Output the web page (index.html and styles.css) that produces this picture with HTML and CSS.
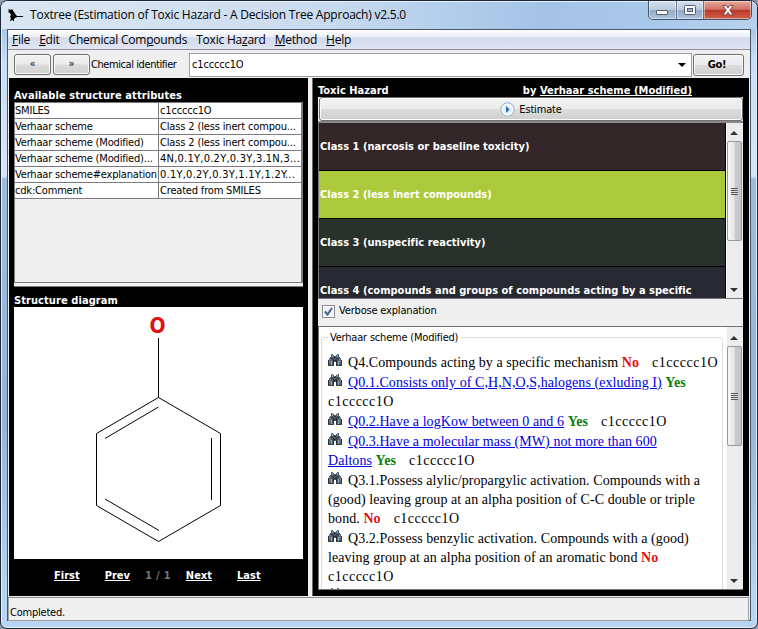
FILE: index.html
```html
<!DOCTYPE html>
<html lang="en">
<head>
<meta charset="utf-8">
<title>Toxtree</title>
<link rel="stylesheet" href="styles.css">
</head>
<body>
<svg class="defs" width="0" height="0">
  <symbol id="binoculars" viewBox="0 0 14 12">
    <path fill="#4d5a66" d="M3 1h3v1h2V1h3v2h1v1h1v2h1v5H8V8H6v3H0V6h1V4h1V3h1z"/>
    <path fill="#2a3138" d="M6 3h2v1H6zM5 5h1v6H5zM8 5h1v6H8zM0 6h1v5H0zM13 6h1v5h-1zM6 6h2v1H6zM3 4h2v1H3zM9 4h2v1H9z"/>
    <path fill="#9aa8b4" d="M4 1h1v2H4zM9 1h1v2H9zM3 7h1v4H3zM10 7h1v4h-1z"/>
    <path fill="#66737f" d="M1 4h2v6H1zM11 4h2v6h-2zM3 0h2v1H3zM9 0h2v1H9z"/>
    <path fill="#3b4550" d="M0 11h6v1H0zM8 11h6v1H8z"/>
  </symbol>
</svg>
<div class="window">
  <header class="titlebar">
    <svg class="app-icon" width="16" height="14" viewBox="0 0 16 14"><path d="M0 1l3 1 1-1 2 3 2 3 1 1h6v1H9l-2 1-1 1v2H5v-1l-3 1 1-3-1-1 1-2-1-2-2-1 1-1z"/></svg>
    <h1>Toxtree (Estimation of Toxic Hazard - A Decision Tree Approach) v2.5.0</h1>
    <div class="controls">
      <span class="ctl min"><svg width="13" height="6"><rect x=".5" y=".5" width="11" height="4" rx=".5" fill="#fff" stroke="#555b70"/></svg></span>
      <span class="ctl max"><svg width="12" height="11"><rect x=".5" y=".5" width="11" height="9" rx="1" fill="#fff" stroke="#555b70"/><rect x="3.5" y="3.5" width="5" height="3" fill="#9fb4cf" stroke="#555b70"/></svg></span>
      <span class="ctl close"><svg width="12" height="11" viewBox="0 0 12 11"><path d="M1 .5h3l2 2.600 2-2.600h3L7.800 5.200 11 10H8L6 7.300 4 10H1l3.200-4.800z" fill="#fff" stroke="#6b3a3f" stroke-width=".8"/></svg></span>
    </div>
  </header>
  <div class="client">
    <nav class="menubar">
      <span><u>F</u>ile</span><span><u>E</u>dit</span><span>Chemical Com<u>p</u>ounds</span><span>Toxic Ha<u>z</u>ard</span><span><u>M</u>ethod</span><span><u>H</u>elp</span>
    </nav>
    <div class="toolbar">
      <button class="btn nav">«</button><button class="btn nav">»</button>
      <label>Chemical identifier</label>
      <div class="combo"><span>c1ccccc1O</span><i class="arrow"></i></div>
      <button class="btn go">Go!</button>
    </div>
    <main class="split">
      <section class="left">
        <h2 class="attr-title">Available structure attributes</h2>
        <div class="attr-view">
          <div class="grid">
            <span>SMILES</span><span>c1ccccc1O</span>
            <span>Verhaar scheme</span><span class="w">Class 2 (less inert compou...</span>
            <span>Verhaar scheme (Modified)</span><span class="w">Class 2 (less inert compou...</span>
            <span>Verhaar scheme (Modified)...</span><span class="n">4N,0.1Y,0.2Y,0.3Y,3.1N,3...</span>
            <span>Verhaar scheme#explanation</span><span class="n">0.1Y,0.2Y,0.3Y,1.1Y,1.2Y...</span>
            <span>cdk:Comment</span><span>Created from SMILES</span>
          </div>
        </div>
        <div class="attr-divider"></div>
        <h2 class="dia-title">Structure diagram</h2>
        <svg class="diagram" width="289" height="252" viewBox="14 307 289 252">
          <g fill="none" stroke="#000"><path d="M158.500 338V397.500L220.500 433.500V505.500L158.500 541.500L96.500 505.500V433.500L158.500 397.500"/><path d="M158.500 407L105 438.500M211.500 438V500M105 499L159 530.500"/></g>
          <text class="atom" x="157.500" y="332.500" text-anchor="middle">O</text>
        </svg>
        <div class="pager"><a>First</a><a>Prev</a><span>1 / 1</span><a>Next</a><a>Last</a></div>
      </section>
      <div class="divider"></div>
      <section class="right">
        <div class="haz-head"><span>Toxic Hazard</span><span class="by">by <u>Verhaar scheme (Modified)</u></span></div>
        <div class="est-wrap"><button class="btn est"><svg width="15" height="15"><circle cx="7.500" cy="7.500" r="6.700" fill="#e9f2fb" stroke="#91afd0"/><circle cx="7.500" cy="7.500" r="5.300" fill="none" stroke="#fff"/><path d="M6 4l3.700 3.500L6 11z" fill="#2c6fb5"/></svg>Estimate</button></div>
        <div class="classes">
          <div class="class-list">
            <div class="c1">Class 1 (narcosis or baseline toxicity)</div>
            <div class="c2">Class 2 (less inert compounds)</div>
            <div class="c3">Class 3 (unspecific reactivity)</div>
            <div class="c4">Class 4 (compounds and groups of compounds acting by a specific</div>
          </div>
          <div class="scroll"><i class="up"></i><div class="thumb"><b></b></div><i class="down"></i></div>
        </div>
        <div class="verbose"><span class="check"><svg width="9" height="9" viewBox="0 0 9 9"><path d="M1 4.500L3.500 7.500L8 1" fill="none" stroke="#4a5f97" stroke-width="2"/></svg></span>Verbose explanation</div>
        <div class="explain">
          <div class="doc">
            <fieldset>
              <legend>Verhaar scheme (Modified)</legend>
              <p class="q"><svg><use href="#binoculars"/></svg>Q4.Compounds acting by a specific mechanism <b class="no">No</b><em>c1ccccc1O</em></p>
              <p class="q"><svg><use href="#binoculars"/></svg><a>Q0.1.Consists only of C,H,N,O,S,halogens (exluding I)</a> <b class="yes">Yes</b></p>
              <p><em class="first">c1ccccc1O</em></p>
              <p class="q"><svg><use href="#binoculars"/></svg><a>Q0.2.Have a logKow between 0 and 6</a> <b class="yes">Yes</b><em>c1ccccc1O</em></p>
              <p class="q"><svg><use href="#binoculars"/></svg><a>Q0.3.Have a molecular mass (MW) not more than 600</a></p>
              <p><a>Daltons</a> <b class="yes">Yes</b><em>c1ccccc1O</em></p>
              <p class="q"><svg><use href="#binoculars"/></svg>Q3.1.Possess alylic/propargylic activation. Compounds with a</p>
              <p>(good) leaving group at an alpha position of C-C double or triple</p>
              <p>bond. <b class="no">No</b><em>c1ccccc1O</em></p>
              <p class="q"><svg><use href="#binoculars"/></svg>Q3.2.Possess benzylic activation. Compounds with a (good)</p>
              <p>leaving group at an alpha position of an aromatic bond <b class="no">No</b></p>
              <p><em class="first">c1ccccc1O</em></p>
              <p class="q"><svg><use href="#binoculars"/></svg></p>
            </fieldset>
          </div>
          <div class="scroll"><i class="up"></i><div class="thumb"><b></b></div><i class="down"></i></div>
        </div>
      </section>
    </main>
    <footer class="status">Completed.</footer>
  </div>
</div>
</body>
</html>
```
FILE: styles.css
```css
* { box-sizing: border-box; }
body { margin: 0; width: 758px; height: 629px; overflow: hidden; background: #8a97a8;
  font: 11px/14px "DejaVu Sans Condensed", "DejaVu Sans", sans-serif; letter-spacing: -0.18px; color: #000; }
h1, h2, p { margin: 0; }
.defs { display: block; }
.window { width: 758px; height: 629px; border: 1px solid #1c2733; border-radius: 8px 8px 7px 7px; padding: 0 6px 7px;
  display: flex; flex-direction: column;
  box-shadow: inset 0 0 0 1px #e4f1fc;
  background: linear-gradient(180deg, #c3d9f0 0, #a9c8e8 28px, #c9def4 60px, #d5e6f8 175px, #9dbbe0 178px, #94b4dc 420px, #b7d5f3 600px); }

.titlebar { height: 28px; display: flex; align-items: flex-start; margin: 0 -6px; padding: 0 5px 0 7px; flex: none;
  border-radius: 7px 7px 0 0; border-top: 1px solid #e4f1fc;
  background: linear-gradient(90deg, #d9e6f3 0, #cfdff0 250px, #c8daee 330px, #b4cfec 440px, #a4c3e6 540px, #a9c9eb 660px, #b9d2ec 100%); }
.app-icon { margin: 6px 6px 0 0; }
h1 { font: 12px/16px "Open Sans", sans-serif; letter-spacing: -0.223px; padding-top: 5px; flex: 1; white-space: nowrap; }
.controls { display: flex; height: 19px; margin-top: -1px; border: 1px solid #445468; border-top: 0; border-radius: 0 0 5px 5px; overflow: hidden; }
.ctl { display: flex; align-items: center; justify-content: center; box-shadow: inset 0 0 0 1px rgba(255,255,255,.45);
  background: linear-gradient(#d3dfec 0, #b9cade 48%, #94abc6 52%, #abc3de 100%); }
.min { width: 28px; padding-top: 5px; border-right: 1px solid #65778c; }
.max { width: 27px; border-right: 1px solid #65778c; }
.close { width: 47px; background: linear-gradient(#e6a99b 0, #cf7264 46%, #b83a29 52%, #cf6048 100%); }

.client { flex: 1; min-height: 0; display: flex; flex-direction: column; border: 1px solid #46586a; background: #efefef; }
.menubar { height: 20px; flex: none; display: flex; gap: 9px; padding: 0 0 0 4px; border-bottom: 1px solid #909090;
  font: 12px/19px "Open Sans", sans-serif; letter-spacing: -0.22px;
  background: linear-gradient(#fff 0, #e9edf7 38%, #d4daed 40%, #e0e5f4 100%); }
.menubar u { text-underline-offset: 1px; }
.toolbar { height: 28px; flex: none; display: flex; align-items: center; padding: 1px 6px 0 6px; }
.btn { border: 1px solid #707070; border-radius: 3px; padding: 0; color: #000; font: inherit; letter-spacing: inherit;
  display: flex; align-items: center; justify-content: center; box-shadow: inset 0 0 0 1px #fafafa;
  background: linear-gradient(#f3f3f3 0, #ebebeb 48%, #dcdcdc 52%, #cfcfcf 100%); }
.nav { width: 37px; height: 21px; margin-right: 2px; padding-bottom: 1px; }
.nav + .nav { margin-right: 1px; }
.toolbar label { width: 98px; letter-spacing: -0.42px; white-space: nowrap; }
.combo { flex: 1; height: 24px; background: #fff; border: 1px solid #a0a0a0; display: flex; align-items: center; padding: 0 5px 0 2px; }
.combo span { flex: 1; }
.arrow { border: 4px solid transparent; border-top-color: #000; border-bottom: 0; margin-top: 1px; }
.go { width: 51px; height: 22px; margin-left: 1px; padding-right: 3px; font-weight: bold; letter-spacing: -0.3px; }

.split { height: 518px; flex: none; display: flex; padding: 0 1px; }
.left { width: 299px; background: #000; padding: 10px 5px 0; display: flex; flex-direction: column; }
.left h2, .haz-head, .class-list, .pager { font: bold 11px/14px "DejaVu Sans Condensed", "DejaVu Sans", sans-serif; color: #fff; letter-spacing: 0.01px; }
.left .attr-title { letter-spacing: 0.08px; height: 14px; line-height: 16px; flex: none; }
.attr-view { height: 181px; flex: none; border: 1px solid #7a7a80; border-right-width: 2px; background: #efefef; }
.grid { display: grid; grid-template-columns: 144px 1fr; grid-auto-rows: 16px; background: #fff; }
.grid span { border-right: 1px solid #7a7a80; border-bottom: 1px solid #7a7a80; line-height: 16px; white-space: nowrap; overflow: hidden; padding-left: 0; }
.grid span:nth-child(even) { padding-left: 1px; border-right: 0; }
.grid .w { letter-spacing: -0.15px; }
.grid .n { letter-spacing: 0.24px; }
.attr-divider { height: 4px; flex: none; background: #f4f4f4; border-bottom: 1px solid #777; }
.left .dia-title { padding-top: 7px; height: 20px; flex: none; letter-spacing: 0.08px; }
.diagram { display: block; flex: none; background: #fff; }
.atom { font: bold 21px "DejaVu Sans Condensed", "DejaVu Sans", sans-serif; fill: #e01010; letter-spacing: 0; }
.pager { display: flex; padding: 10px 0 0 40px; }
.pager a { text-decoration: underline; margin-right: 25px; }
.pager span { color: #777; margin: 0 15px 0 -10px; letter-spacing: .3px; }
.divider { width: 5px; background: #f1f1f1; border-right: 1px solid #6c6c6c; }

.right { flex: 1; min-width: 0; background: #000; padding: 5px 6px 0 5px; display: flex; flex-direction: column; }
.haz-head { display: flex; justify-content: space-between; height: 14px; line-height: 16px; flex: none; }
.right .haz-head { line-height: 16px; }
.by { padding-right: 51px; letter-spacing: 0.04px; }
.est-wrap { height: 26px; flex: none; background: #f4f4f4; border-bottom: 2px solid #888; padding: 0 0 0 1px; }
.est { width: 100%; height: 24px; padding-top: 1px; }
.est svg { margin-right: 4px; }
.classes { height: 176px; flex: none; display: flex; overflow: hidden; background: #efefef; border-left: 1px solid #777; border-bottom: 1px solid #777; }
.class-list { flex: 1; overflow: hidden; border-right: 1px solid #000; }
.class-list div { height: 48px; padding: 17px 0 0 1px; border-bottom: 1px solid #000; white-space: nowrap; }
.c1 { background: #322628; } .c2 { background: #acc93b; } .c3 { background: #29312c; } .c4 { background: #262931; }
.scroll { width: 17px; flex: none; display: flex; flex-direction: column; align-items: center; background: #ececec; padding: 8px 2px 6px 0; border-left: 1px solid #fafafa; }
.up { border: 4px solid transparent; border-bottom-color: #333; border-top: 0; flex: none; margin-bottom: 6px; }
.down { border: 4px solid transparent; border-top-color: #333; border-bottom: 0; margin-top: auto; flex: none; }
.thumb { width: 15px; height: 100px; flex: none; border: 1px solid #999; border-radius: 2px; display: flex; align-items: center; justify-content: center;
  background: linear-gradient(90deg, #f6f6f6 0, #e4e4e6 48%, #cbcbce 55%, #c5c5c8 100%); }
.thumb b { width: 7px; height: 7px; background: repeating-linear-gradient(#555 0 1px, #e0e0e0 1px 2px); }
.verbose { height: 28px; flex: none; background: #efefef; border-bottom: 1px solid #707070; display: flex; align-items: flex-start; padding: 5px 0 0 4px; }
.check { width: 13px; height: 13px; border: 1px solid #8b8e93; background: #eef1f6; box-shadow: inset 0 0 0 1px #fff; margin: 1px 4px 0 0; display: flex; align-items: center; justify-content: center; }
.explain { height: 263px; flex: none; display: flex; background: #fff; border-left: 1px solid #777; border-bottom: 1px solid #777; overflow: hidden; }
.explain .scroll { padding-top: 9px; }
.doc { flex: 1; min-width: 0; padding: 3px 3px 0 2px; }
fieldset { margin: 0; padding: 0 0 0 6px; border: 1px solid #d5dfe5; border-radius: 3px; height: 300px; min-width: 0; }
legend { padding: 0 2px; line-height: 15px; height: 14px; margin-bottom: 8px; letter-spacing: -0.2px; }
p { height: 19px; font: 14px/19px "Liberation Serif", serif; letter-spacing: 0.065px; white-space: nowrap; }
.q { height: 20px; line-height: 21px; }
p svg { width: 14px; height: 12px; margin-right: 6px; vertical-align: 1px; }
p a { color: #0000e0; text-decoration: underline; }
em { font-style: normal; letter-spacing: 0.5px; margin-left: 13px; }
em.first { margin-left: 0; }
.no { color: #e01010; } .yes { color: #0b7d0b; }
.status { flex: 1; border: 1px solid #a0a0a0; border-top: 1px solid #909090; margin: 1px 1px 1px 0; padding: 8px 0 0 1px; letter-spacing: -0.22px; }
```
